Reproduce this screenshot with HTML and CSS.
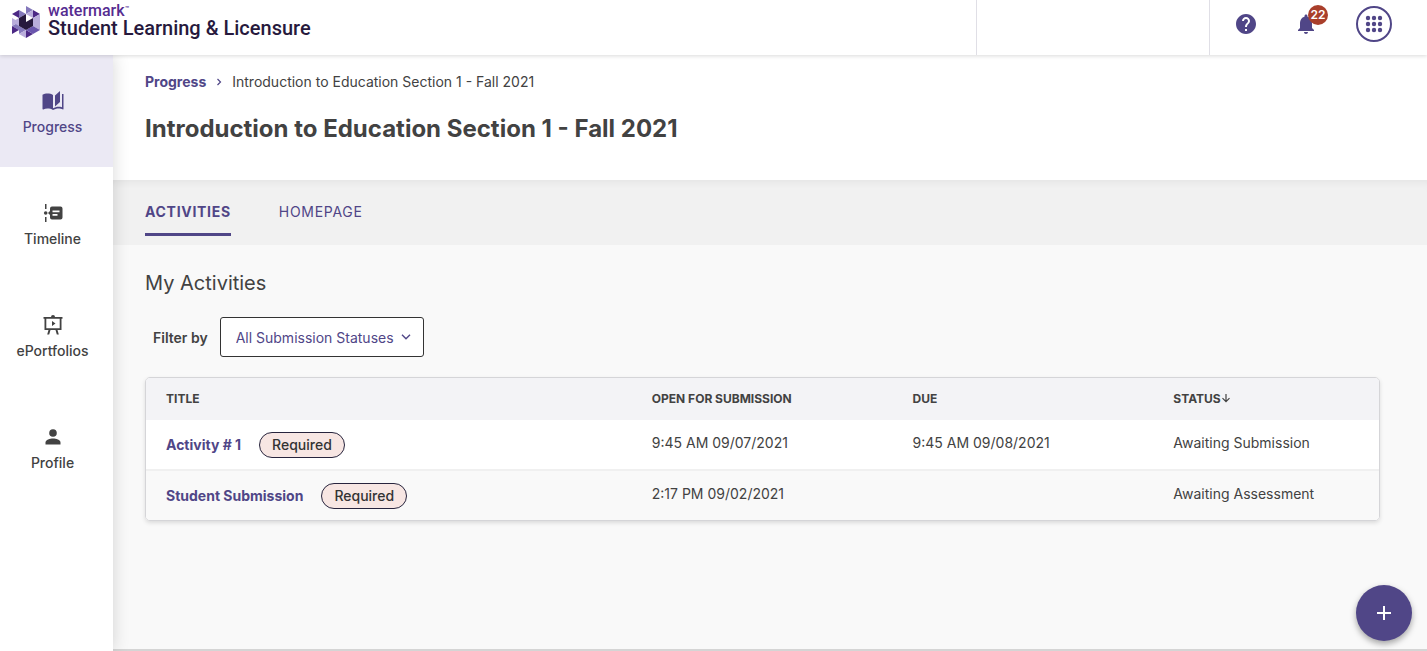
FILE: index.html
```html
<!DOCTYPE html>
<html lang="en">
	<head>
		<meta charset="UTF-8">
		<meta name="viewport" content="width=device-width, initial-scale=1">
		<title>Student Learning &amp; Licensure</title>
		<link rel="stylesheet" href="styles.css">
	</head>
	<body>
		<header class="topbar">
			<a class="logo" href="#">
				<svg class="logo-mark" width="28" height="32" viewBox="0 0 28 32" aria-hidden="true">
					<path fill="#8478bb" d="M14 0l7 4-7 4zM7 4l7 4-7 4zM0 20l7-4v8zM7 20l7 4-7 4z"/>
					<path fill="#4c2885" d="M0 8l7-4v8zM0 20l7 4-7 4zM14 24l7 4-7 4zM21 4l7 4-7 4z"/>
					<path fill="#b9addb" d="M14 8l7-4v8zM28 8v8l-7-4zM0 12l7 4-7 4zM7 12v8l-7-4zM21 12l7 4-7 4zM28 16v8l-7-4zM14 24v8l-7-4z"/>
					<path fill="#6a55ad" d="M21 20l7 4-7 4zM14 24l7-4v8z"/>
					<path fill="#27193d" d="M7 12l7-4v8l7-4v8l-7 4-7-4z"/>
				</svg>
				<span class="logo-text">
					<span class="logo-brand">watermark<sup>™</sup></span>
					<span class="logo-product">Student Learning &amp; Licensure</span>
				</span>
			</a>
			<div class="account"></div>
			<nav class="tools" aria-label="Tools">
				<button class="tool" type="button" aria-label="Help">
					<svg width="24" height="24" viewBox="0 0 24 24" fill="currentColor"><path d="M12 2C6.480 2 2 6.480 2 12s4.480 10 10 10 10-4.480 10-10S17.520 2 12 2zm1 17h-2v-2h2v2zm2.070-7.750l-.9.920C13.450 12.900 13 13.500 13 15h-2v-.5c0-1.100.450-2.100 1.170-2.830l1.240-1.260c.370-.360.590-.860.590-1.410 0-1.100-.9-2-2-2s-2 .9-2 2H8c0-2.210 1.790-4 4-4s4 1.790 4 4c0 .880-.360 1.680-.930 2.250z"/></svg>
				</button>
				<button class="tool" type="button" aria-label="Notifications">
					<svg width="24" height="24" viewBox="0 0 24 24" fill="currentColor"><path d="M12 22c1.100 0 2-.9 2-2h-4c0 1.100.890 2 2 2zm6-6v-5c0-3.070-1.640-5.640-4.500-6.320V4c0-.830-.670-1.500-1.500-1.500s-1.500.670-1.500 1.500v.680C7.630 5.360 6 7.920 6 11v5l-2 2v1h16v-1l-2-2z"/></svg>
					<span class="badge">22</span>
				</button>
				<button class="tool tool-apps" type="button" aria-label="Apps">
					<svg width="18" height="18" viewBox="0 0 18 18" fill="currentColor">
						<circle cx="3" cy="3" r="2.200"/><circle cx="9" cy="3" r="2.200"/><circle cx="15" cy="3" r="2.200"/>
						<circle cx="3" cy="9" r="2.200"/><circle cx="9" cy="9" r="2.200"/><circle cx="15" cy="9" r="2.200"/>
						<circle cx="3" cy="15" r="2.200"/><circle cx="9" cy="15" r="2.200"/><circle cx="15" cy="15" r="2.200"/>
					</svg>
				</button>
			</nav>
		</header>

		<div class="layout">
			<nav class="sidebar" aria-label="Main">
				<a class="side-item current" href="#">
					<svg width="24" height="24" viewBox="0 0 24 24" fill="currentColor"><path d="M19 2l-5 4.500v11l5-4.500V2zM1.500 5.800v14.300c0 .4.500.6.800.4 1.200-.6 2.700-.9 4.200-.9 1.900 0 4 .4 5.500 1.500V6C10.500 4.900 8.400 4.500 6.500 4.500c-1.800 0-3.700.4-5 1.300zM21 5v13.200c-1.100-.4-2.300-.5-3.500-.5-1.700 0-4.100.7-5.500 1.600v1.800c1.400-.9 3.800-1.500 5.500-1.500 1.500 0 3.200.3 4.400.9.400.2.600 0 .6-.4V5z"/></svg>
					<span>Progress</span>
				</a>
				<a class="side-item" href="#">
					<svg width="24" height="24" viewBox="0 0 24 24" fill="currentColor"><path d="M4 3h1.500v5H4zM4 16h1.500v5H4z"/><circle cx="4.700" cy="12" r="1.800"/><path fill-rule="evenodd" d="M11 5.500h8.500a2 2 0 0 1 2 2v9a2 2 0 0 1-2 2H11a2 2 0 0 1-2-2V14l-2-2 2-2V7.500a2 2 0 0 1 2-2zm.5 4v1.800h7V9.500zm0 3.500v1.800h5V13z"/></svg>
					<span>Timeline</span>
				</a>
				<a class="side-item" href="#">
					<svg width="24" height="24" viewBox="0 0 24 24" fill="currentColor"><path fill-rule="evenodd" d="M10 4a2 2 0 0 1 4 0h7.500v1.800H20.500V17h-4l1.300 4.500h-2L14.500 17h-5l-1.300 4.500h-2L7.500 17h-4V5.800H2.500V4zM5.300 5.800v9.400h13.400V5.800zM11 8l3.500 2.500L11 13z"/></svg>
					<span>ePortfolios</span>
				</a>
				<a class="side-item" href="#">
					<svg width="24" height="24" viewBox="0 0 24 24" fill="currentColor"><circle cx="12" cy="8" r="3.800"/><path d="M12 13.500c-3 0-7.500 1.300-7.500 4v2h15v-2c0-2.700-4.500-4-7.500-4z"/></svg>
					<span>Profile</span>
				</a>
			</nav>

			<main class="main">
				<div class="page-head">
					<nav class="breadcrumb" aria-label="Breadcrumb">
						<a href="#">Progress</a>
						<svg width="6" height="8" viewBox="0 0 6 8" fill="none" stroke="currentColor" stroke-width="1.200"><path d="M1.500 1l3 3-3 3"/></svg>
						<span>Introduction to Education Section 1 - Fall 2021</span>
					</nav>
					<h1>Introduction to Education Section 1 - Fall 2021</h1>
				</div>

				<nav class="tabs" aria-label="Sections">
					<a class="tab current" href="#">ACTIVITIES</a>
					<a class="tab" href="#">HOMEPAGE</a>
				</nav>

				<section class="content">
					<h2>My Activities</h2>
					<div class="filter">
						<label for="status">Filter by</label>
						<div class="select-box">
							<select id="status">
								<option>All Submission Statuses</option>
							</select>
							<svg class="select-arrow" width="10" height="6" viewBox="0 0 10 6" fill="none" stroke="currentColor" stroke-width="1.400"><path d="M1 .8l4 4 4-4"/></svg>
						</div>
					</div>

					<div class="table-card">
						<table>
							<thead>
								<tr>
									<th class="col-title">TITLE</th>
									<th class="col-date">OPEN FOR SUBMISSION</th>
									<th class="col-date">DUE</th>
									<th>STATUS<svg class="sort" width="10" height="10" viewBox="0 0 10 10" fill="none" stroke="currentColor" stroke-width="1.200"><path d="M5 1v7.500M1.500 5.200L5 8.700l3.500-3.500"/></svg></th>
								</tr>
							</thead>
							<tbody>
								<tr>
									<td class="title"><div class="title-cell"><a href="#">Activity # 1</a><span class="tag">Required</span></div></td>
									<td>9:45 AM 09/07/2021</td>
									<td>9:45 AM 09/08/2021</td>
									<td>Awaiting Submission</td>
								</tr>
								<tr>
									<td class="title"><div class="title-cell"><a href="#">Student Submission</a><span class="tag">Required</span></div></td>
									<td>2:17 PM 09/02/2021</td>
									<td></td>
									<td>Awaiting Assessment</td>
								</tr>
							</tbody>
						</table>
					</div>
				</section>
			</main>
		</div>

		<button class="add" type="button" aria-label="Add">
			<svg width="16" height="16" viewBox="0 0 16 16" fill="none" stroke="currentColor" stroke-width="2"><path d="M8 1v14M1 8h14"/></svg>
		</button>
	</body>
</html>
```
FILE: styles.css
```css
*{
	box-sizing: border-box;
	padding: 0;
	margin: 0;
}

body {
	display: flex;
	flex-direction: column;
	min-height: 100vh;
	background: #fff;
	color: #424242;
	font: 14px/20px Inter, "Liberation Sans", sans-serif;
}

a {
	color: #504687;
	text-decoration: none;
}

button {
	border: 0;
	background: none;
	font: inherit;
	color: #504687;
	cursor: pointer;
}

svg {
	display: block;
	flex: none;
}

/* top bar */
.topbar {
	position: relative;
	z-index: 2;
	display: flex;
	height: 55px;
	background: #fff;
	box-shadow: 0 1px 4px rgba(0, 0, 0, 0.15);
}

.logo {
	display: flex;
	flex: 1;
	align-items: flex-start;
	gap: 8px;
	padding: 4px 0 0 12px;
}

.logo-mark {
	margin-top: 2px;
}

.logo-text {
	display: flex;
	flex-direction: column;
	font-family: Roboto, "Liberation Sans", sans-serif;
	white-space: nowrap;
}

.logo-brand {
	color: #562c91;
	font-size: 16px;
	font-weight: 500;
	line-height: 14px;
}

.logo-brand sup {
	font-size: 7px;
	line-height: 0;
	vertical-align: 5px;
}

.logo-product {
	color: #27193d;
	font-size: 20px;
	font-weight: 500;
	line-height: 20px;
}

.account {
	width: 233px;
	border-left: 1px solid #e0dfe6;
}

.tools {
	display: flex;
	align-items: flex-start;
	padding: 6px 35px 0 18px;
	border-left: 1px solid #e0dfe6;
}

.tool {
	position: relative;
	display: flex;
	align-items: center;
	justify-content: center;
	width: 36px;
	height: 36px;
	margin-right: 24px;
}

.tool-apps {
	margin: 0 0 0 8px;
	border: 2px solid #504687;
	border-radius: 50%;
}

.badge {
	position: absolute;
	top: -1px;
	right: -4px;
	width: 20px;
	height: 20px;
	border-radius: 50%;
	background: #a93f2b;
	color: #fff;
	font-size: 12px;
	font-weight: 600;
	line-height: 20px;
	text-align: center;
}

/* side menu */
.layout {
	display: flex;
	flex: 1;
}

.sidebar {
	position: relative;
	z-index: 1;
	flex: none;
	width: 113px;
	background: #fff;
	box-shadow: 0 0 16px rgba(0, 0, 0, 0.16);
}

.side-item {
	display: flex;
	flex-direction: column;
	align-items: center;
	gap: 4px;
	height: 112px;
	padding: 34px 8px 0 0;
	color: #424242;
	font-weight: 500;
}

.side-item.current {
	background: #ebe9f4;
	color: #504687;
}

/* page */
.main {
	display: flex;
	flex: 1;
	flex-direction: column;
	min-width: 0;
	border-bottom: 2px solid #d5d5d5;
	background: #f9f9f9;
}

.page-head {
	height: 125px;
	padding: 17px 32px 0;
	background: #fff;
}

.breadcrumb {
	display: flex;
	align-items: center;
	gap: 10px;
}

.breadcrumb a {
	font-weight: 700;
}

.breadcrumb svg {
	color: #504687;
}

h1 {
	margin-top: 21px;
	font-size: 24px;
	font-weight: 700;
	line-height: 32px;
}

.tabs {
	display: flex;
	gap: 48px;
	height: 65px;
	padding: 22px 32px 0;
	background: #f1f1f1;
	box-shadow: inset 0 8px 8px -6px rgba(0, 0, 0, 0.06);
}

.tab {
	height: 34px;
	letter-spacing: 0.05em;
}

.tab.current {
	border-bottom: 3px solid #504687;
	font-weight: 700;
}

.content {
	padding: 24px 47px 32px 32px;
}

h2 {
	font-size: 20px;
	font-weight: 400;
	line-height: 28px;
}

.filter {
	display: flex;
	align-items: center;
	gap: 12px;
	margin: 20px 0;
	padding-left: 8px;
}

.filter label {
	padding-top: 2px;
	font-weight: 600;
}

.select-box {
	position: relative;
	color: #504687;
}

select {
	appearance: none;
	width: 204px;
	height: 40px;
	padding: 2px 28px 0 15px;
	border: 1px solid #333;
	border-radius: 3px;
	background: #fff;
	color: #504687;
	font: inherit;
}

.select-arrow {
	position: absolute;
	top: 17px;
	right: 13px;
	pointer-events: none;
}

/* activities */
.table-card {
	overflow: hidden;
	border: 1px solid #d5d5d8;
	border-radius: 5px;
	box-shadow: 0 2px 4px rgba(0, 0, 0, 0.12);
}

table {
	width: 100%;
	border-collapse: collapse;
	table-layout: fixed;
}

th {
	height: 42px;
	padding: 0 20px;
	background: #f3f3f6;
	font-size: 12px;
	font-weight: 700;
	text-align: left;
}

.col-title {
	width: 39.4%;
}

.col-date {
	width: 21.15%;
}

.sort {
	display: inline-block;
}

td {
	height: 50px;
	padding: 0 20px 3px;
	background: #fff;
}

td.title {
	padding-bottom: 0;
}

tr + tr td {
	border-top: 2px solid #f0f0f0;
	background: #f9f9f9;
}

.title-cell {
	display: flex;
	align-items: center;
	gap: 18px;
}

.title-cell a {
	font-weight: 700;
}

.tag {
	height: 26px;
	padding: 0 12px;
	border: 1px solid #27243d;
	border-radius: 13px;
	background: #f7e6e3;
	color: #333;
	font-weight: 500;
	line-height: 24px;
}

.add {
	position: fixed;
	z-index: 3;
	right: 15px;
	bottom: 10px;
	display: flex;
	align-items: center;
	justify-content: center;
	width: 56px;
	height: 56px;
	border-radius: 50%;
	background: #504687;
	box-shadow: 0 3px 6px rgba(0, 0, 0, 0.35);
	color: #fff;
}
```
